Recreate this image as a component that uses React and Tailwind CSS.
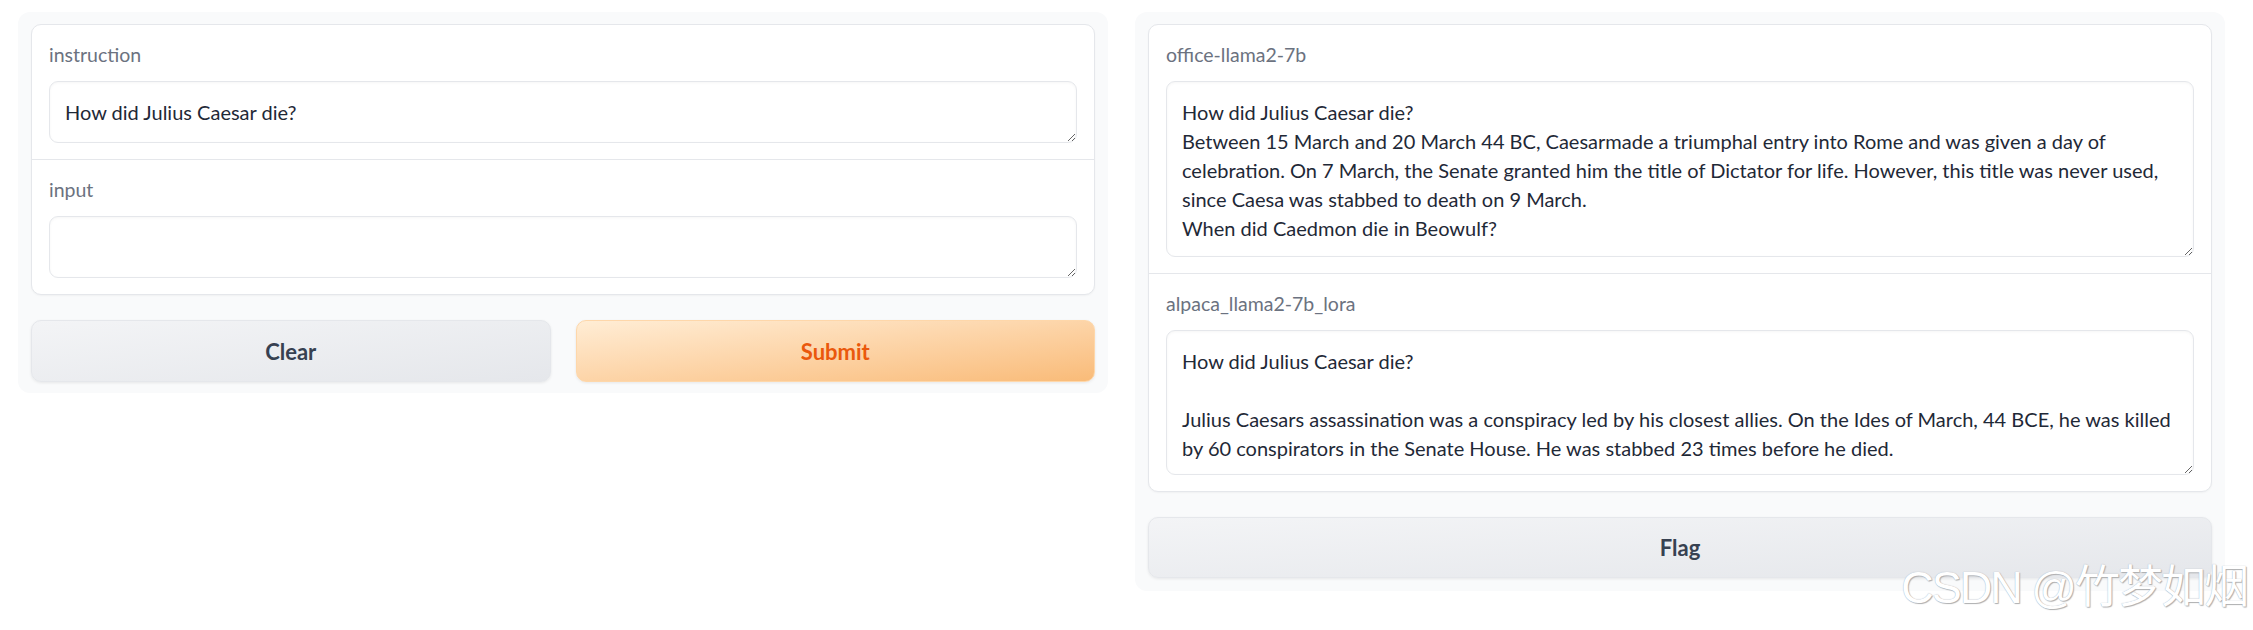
import React from 'react';

const font = { fontFamily: 'Lato, "Noto Sans", sans-serif' };

const Field = ({ label, value, height, last }) => (
    <div className={`px-[17px] pt-[17px] pb-[16px] ${last ? '' : 'border-b border-[#e5e7eb]'}`}>
        <div className="h-[26px] mb-[13px] text-[19.5px] leading-[26px] text-[#6b7280]">{label}</div>
        <textarea
            readOnly
            wrap="off"
            defaultValue={value}
            className={`block w-full ${height} resize-y overflow-hidden whitespace-pre rounded-[9px] border border-[#e5e7eb] bg-white px-[15px] pt-[16px] pb-[12px] text-[20px] leading-[29px] text-[#1f2937] shadow-[inset_0_1px_3px_rgba(0,0,0,0.04)] outline-none`}
            style={font}
        />
    </div>
);

const GrayButton = ({ children }) => (
    <button className="flex items-center justify-center rounded-[10px] border border-[#e5e7eb] bg-gradient-to-br from-[#f3f4f6] to-[#e5e7eb] text-[22px] font-bold text-[#374151] shadow-[0_1px_3px_rgba(0,0,0,0.08)]">
        {children}
    </button>
);

const answer1 = [
    'How did Julius Caesar die?',
    'Between 15 March and 20 March 44 BC, Caesarmade a triumphal entry into Rome and was given a day of',
    'celebration. On 7 March, the Senate granted him the title of Dictator for life. However, this title was never used,',
    'since Caesa was stabbed to death on 9 March.',
    'When did Caedmon die in Beowulf?',
].join('\n');

const answer2 = [
    'How did Julius Caesar die?',
    '',
    'Julius Caesars assassination was a conspiracy led by his closest allies. On the Ides of March, 44 BCE, he was killed',
    'by 60 conspirators in the Senate House. He was stabbed 23 times before he died.',
].join('\n');

export default function App() {
    return (
        <div className="relative w-full h-[630px] bg-white overflow-hidden" style={font}>
            <div className="flex items-start gap-[27px] pl-[18px] pr-[28px] pt-[12px]">

                {/* Inputs */}
                <div className="flex-1 rounded-[12px] bg-[#f9fafb] px-[13px] pt-[12px] pb-[11px]">
                    <div className="rounded-[10px] border border-[#e5e7eb] bg-white shadow-[0_1px_2px_rgba(0,0,0,0.04)]">
                        <Field label="instruction" value="How did Julius Caesar die?" height="h-[62px]" />
                        <Field label="input" value="" height="h-[62px]" last />
                    </div>
                    <div className="mt-[25px] grid h-[62px] grid-cols-2 gap-[25px]">
                        <GrayButton>Clear</GrayButton>
                        <button className="flex items-center justify-center rounded-[10px] border border-[#fed7aa] bg-gradient-to-br from-[#ffedd5] to-[#f9bb78] text-[22px] font-bold text-[#ea580c] shadow-[0_1px_3px_rgba(0,0,0,0.08)]">
                            Submit
                        </button>
                    </div>
                </div>

                {/* Outputs */}
                <div className="flex-1 rounded-[12px] bg-[#f9fafb] px-[13px] pt-[12px] pb-[13px]">
                    <div className="rounded-[10px] border border-[#e5e7eb] bg-white shadow-[0_1px_2px_rgba(0,0,0,0.04)]">
                        <Field label="office-llama2-7b" value={answer1} height="h-[176px]" />
                        <Field label="alpaca_llama2-7b_lora" value={answer2} height="h-[145px]" last />
                    </div>
                    <div className="mt-[25px] grid h-[61px]">
                        <GrayButton>Flag</GrayButton>
                    </div>
                </div>
            </div>

            {/* Watermark */}
            <div
                className="absolute right-[6px] top-[560px] text-[45px] leading-[56px] tracking-[-2px] text-white [text-shadow:0_0_1px_#9ca3af,1px_1px_1px_#b0b0b0]"
                style={{ fontFamily: '"Liberation Sans", "Noto Sans CJK SC", sans-serif' }}
            >
                CSDN @竹梦如烟
            </div>
        </div>
    );
}
